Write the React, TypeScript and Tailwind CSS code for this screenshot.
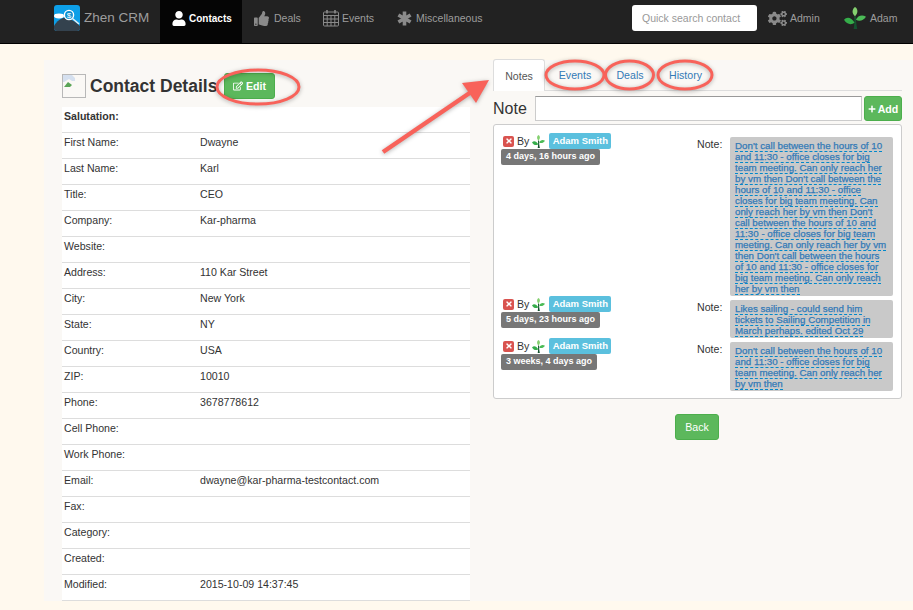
import React from 'react';
import { FaUser, FaThumbsUp, FaCogs, FaRegEdit, FaPlus, FaTimes } from 'react-icons/fa';

const rows = [
  ['First Name:', 'Dwayne'],
  ['Last Name:', 'Karl'],
  ['Title:', 'CEO'],
  ['Company:', 'Kar-pharma'],
  ['Website:', ''],
  ['Address:', '110 Kar Street'],
  ['City:', 'New York'],
  ['State:', 'NY'],
  ['Country:', 'USA'],
  ['ZIP:', '10010'],
  ['Phone:', '3678778612'],
  ['Cell Phone:', ''],
  ['Work Phone:', ''],
  ['Email:', 'dwayne@kar-pharma-testcontact.com'],
  ['Fax:', ''],
  ['Category:', ''],
  ['Created:', ''],
  ['Modified:', '2015-10-09 14:37:45'],
];

const long = [
  "Don't call between the hours of 10",
  'and 11:30 - office closes for big',
  'team meeting. Can only reach her',
  "by vm then Don't call between the",
  'hours of 10 and 11:30 - office',
  'closes for big team meeting. Can',
  "only reach her by vm then Don't",
  'call between the hours of 10 and',
  '11:30 - office closes for big team',
  'meeting. Can only reach her by vm',
  "then Don't call between the hours",
  'of 10 and 11:30 - office closes for',
  'big team meeting. Can only reach',
  'her by vm then',
];

const notes = [
  { ago: '4 days, 16 hours ago', lines: long },
  {
    ago: '5 days, 23 hours ago',
    lines: ['Likes sailing - could send him', 'tickets to Sailing Competition in', 'March perhaps. edited Oct 29'],
  },
  {
    ago: '3 weeks, 4 days ago',
    lines: ["Don't call between the hours of 10", 'and 11:30 - office closes for big', 'team meeting. Can only reach her', 'by vm then'],
  },
];

const Tree = ({ size }: { size: number }) => (
  <svg width={size} height={size} viewBox="0 0 24 24" className="shrink-0">
    <path d="M10.5 24 C11.5 19 11.5 15 11 10 L13 10 C13 15 13.5 19 14.5 24 Z" fill="#14512f" />
    <path d="M11.5 17 C8 11 3 10 0 14 C3 19 8 20 11.5 17 Z" fill="#35ad4a" />
    <path d="M13 14 C15 9 20 8 24 10.5 C21 15 17 16 13 14 Z" fill="#4cbb57" />
    <path d="M12 10 C8 7 9 2 12 0 C15.5 2 15.5 7 12 10 Z" fill="#84d06f" />
  </svg>
);

const Logo = () => (
  <svg width="26" height="26" viewBox="0 0 26 26" className="shrink-0 rounded-[3px] mt-[5px]">
    <rect width="26" height="26" fill="#0d9fe8" />
    <path d="M0 26 V21 C3 16 8 12 12 13 C16 14 21 16 26 21 V26 Z" fill="#34424e" />
    <ellipse cx="5" cy="11" rx="5" ry="2.4" fill="#ffffff" />
    <circle cx="15" cy="10" r="4.6" fill="#0d8fd0" stroke="#ffffff" strokeWidth="1.4" />
    <path d="M18.5 13.5 L25 19" stroke="#e6eef3" strokeWidth="1.6" />
    <text x="15" y="13" fontSize="8" textAnchor="middle" fill="#ffffff" fontFamily="Liberation Sans">$</text>
  </svg>
);

const Calendar = () => (
  <svg width="18" height="18" viewBox="0 0 18 18" className="shrink-0" fill="none" stroke="#8a8a8a" strokeWidth="1">
    <rect x="1.5" y="3" width="15" height="14" rx="1" />
    <path d="M1.5 6.5 H16.5 M1.5 10 H16.5 M1.5 13.5 H16.5 M5.2 6.5 V17 M9 6.5 V17 M12.8 6.5 V17" />
    <path d="M5 1 V4.5 M13 1 V4.5" strokeWidth="1.6" />
  </svg>
);

const Asterisk = () => (
  <svg width="15" height="15" viewBox="0 0 15 15" className="shrink-0" stroke="#8a8a8a" strokeWidth="3.6">
    <path d="M7.5 0.5 V14.5 M1.4 4 L13.6 11 M13.6 4 L1.4 11" />
  </svg>
);

const BrokenImage = () => (
  <div className="w-6 h-6 border border-[#b8b8b8] shrink-0 relative">
    <svg width="14" height="13" viewBox="0 0 14 13" className="absolute left-0 top-0">
      <path d="M0 0 H9 L12 3 V6 L9 6 L6 4 L1 7 H0 Z" fill="#d5e0ef" />
      <path d="M1 12 L5 7 L9 10 L7 12 Z" fill="#5aa457" />
    </svg>
  </div>
);

const NavItem = ({ icon, label, className }: { icon: React.ReactNode; label: string; className: string }) => (
  <div className={`flex items-center h-[36px] text-[#9d9d9d] ${className}`}>
    {icon}
    <span>{label}</span>
  </div>
);

export default function App() {
  return (
    <div className="relative w-[913px] h-[610px] overflow-hidden bg-[#fff9ee] text-[10.6px] leading-[14px] text-[#333] font-['Liberation_Sans',Arial,sans-serif]">
      <nav className="flex items-start h-[44px] bg-[#222] border-b border-black pl-[54px] text-[10.5px]">
        <Logo />
        <span className="ml-1 w-[76px] h-[36px] leading-[36px] text-[13.5px] text-[#9d9d9d]">Zhen CRM</span>
        <div className="flex items-center gap-[3px] h-[43px] pb-[6px] w-[82px] pl-3 bg-[#050505] text-white text-[10px] font-bold">
          <FaUser className="w-[14px] h-[15px]" />
          <span>Contacts</span>
        </div>
        <NavItem className="ml-3 gap-[5px] w-[68px] text-[#9d9d9d]" icon={<FaThumbsUp className="w-[15px] h-[15px] text-[#8a8a8a]" />} label="Deals" />
        <NavItem className="gap-[2px] w-[75px]" icon={<Calendar />} label="Events" />
        <NavItem className="gap-[4px] w-[235px]" icon={<Asterisk />} label="Miscellaneous" />
        <div className="flex items-center w-[125px] h-[26px] mt-[5px] px-[10px] bg-white rounded-[3px] text-[#999]">Quick search contact</div>
        <NavItem className="ml-[11px] gap-[3px] w-[76px]" icon={<FaCogs className="w-[19px] h-[17px] text-[#8a8a8a]" />} label="Admin" />
        <NavItem className="gap-[4px]" icon={<Tree size={22} />} label="Adam" />
      </nav>

      <main className="flex ml-[44px] mt-4 h-[541px] bg-[#faf8f5]">
        <section className="w-[426px] ml-[18px]">
          <div className="flex items-center h-[47px] pt-[4px]">
            <BrokenImage />
            <h1 className="ml-[4px] w-[134px] text-[17.5px] font-bold whitespace-nowrap">Contact Details</h1>
            <button className="flex items-center gap-[3px] w-[51px] h-[26px] justify-center rounded-[3px] bg-[#5cb85c] border border-[#4cae4c] text-white font-bold">
              <FaRegEdit className="w-[10px] h-[10px]" />
              Edit
            </button>
          </div>
          <div className="w-[408px] bg-white">
            <div className="h-[26px] pl-[2px] pt-[2px] border-b border-[#ddd] font-bold">Salutation:</div>
            {rows.map(([label, value]) => (
              <div key={label} className="flex h-[26px] pl-[2px] pt-[2px] border-b border-[#ddd]">
                <span className="w-[136px]">{label}</span>
                <span>{value}</span>
              </div>
            ))}
          </div>
        </section>

        <section className="w-[409px] ml-[5px] -mt-px">
          <div className="flex h-[32px] border-b border-[#ddd] text-[#337ab7]">
            <div className="flex items-center justify-center w-[52px] h-[32px] bg-white border border-[#ddd] border-b-0 rounded-t-[3px] text-[#555]">Notes</div>
            <div className="flex items-center justify-center w-[60px]">Events</div>
            <div className="flex items-center justify-center w-[50px]">Deals</div>
            <div className="flex items-center justify-center w-[61px]">History</div>
          </div>
          <div className="flex items-center h-[25px] mt-[5px]">
            <span className="w-[42px] text-[16px] text-[#333]">Note</span>
            <div className="w-[327px] h-[25px] bg-white border border-[#ccc] border-t-[#999]" />
            <button className="flex items-center justify-center gap-[2px] ml-[2px] w-[38px] h-[25px] rounded-[3px] bg-[#5cb85c] border border-[#4cae4c] text-white font-bold">
              <FaPlus className="w-[8px] h-[8px]" />
              Add
            </button>
          </div>
          <div className="h-[275px] mt-[3px] bg-white border border-[#ccc] rounded-[3px] pl-[7px] pt-[8px]">
            {notes.map((note) => (
              <div key={note.ago} className="flex">
                <div className="w-[196px]">
                  <div className="flex items-center h-[16px] pl-[2px]">
                    <span className="flex items-center justify-center w-[11px] h-[11px] bg-[#d9534f] rounded-[2px] text-white">
                      <FaTimes className="w-[8px] h-[8px]" />
                    </span>
                    <span className="ml-[3px]">By</span>
                    <span className="ml-[3px]"><Tree size={13} /></span>
                    <span className="flex items-center justify-center ml-[4px] w-[62px] h-[16px] rounded-[2px] bg-[#5bc0de] text-white text-[9.5px] font-bold">Adam Smith</span>
                  </div>
                  <span className="block w-fit px-[5px] h-[16px] leading-[15px] rounded-[2px] bg-[#777] text-white text-[9px] font-bold">{note.ago}</span>
                </div>
                <span className="w-[33px] pt-[4px]">Note:</span>
                <div className="mt-[4px] w-[163px] bg-[#c9c9c9] rounded-[2px] px-[5px] pt-[3px] pb-[2px] text-[9.75px] leading-[11px] text-[#337ab7] [-webkit-text-stroke:0.25px_#337ab7]">
                  {note.lines.map((line) => (
                    <div key={line} className="h-[11px] whitespace-nowrap">
                      <span className="border-b border-dashed border-[#0088cc]">{line}</span>
                    </div>
                  ))}
                </div>
              </div>
            ))}
          </div>
          <button className="flex items-center justify-center ml-[182px] mt-[15px] w-[44px] h-[26px] rounded-[3px] bg-[#5cb85c] border border-[#4cae4c] text-white">Back</button>
        </section>
      </main>

      {/* red annotations drawn on top of the screenshot */}
      <svg width="913" height="610" className="absolute left-0 top-0 pointer-events-none" style={{ filter: 'drop-shadow(0 1px 2px rgba(0,0,0,0.3))' }}>
        <g fill="none" stroke="#f8625a" strokeWidth="3">
          <ellipse cx="258" cy="87" rx="41" ry="17" />
          <ellipse cx="575" cy="75" rx="29" ry="14" />
          <ellipse cx="629.5" cy="75" rx="24" ry="14" />
          <ellipse cx="685" cy="75" rx="27" ry="14" />
          <path d="M383 152 L474 90" strokeWidth="4.5" />
        </g>
        <path d="M489 80 L462 83 L476 103 Z" fill="#f8625a" />
      </svg>
    </div>
  );
}
